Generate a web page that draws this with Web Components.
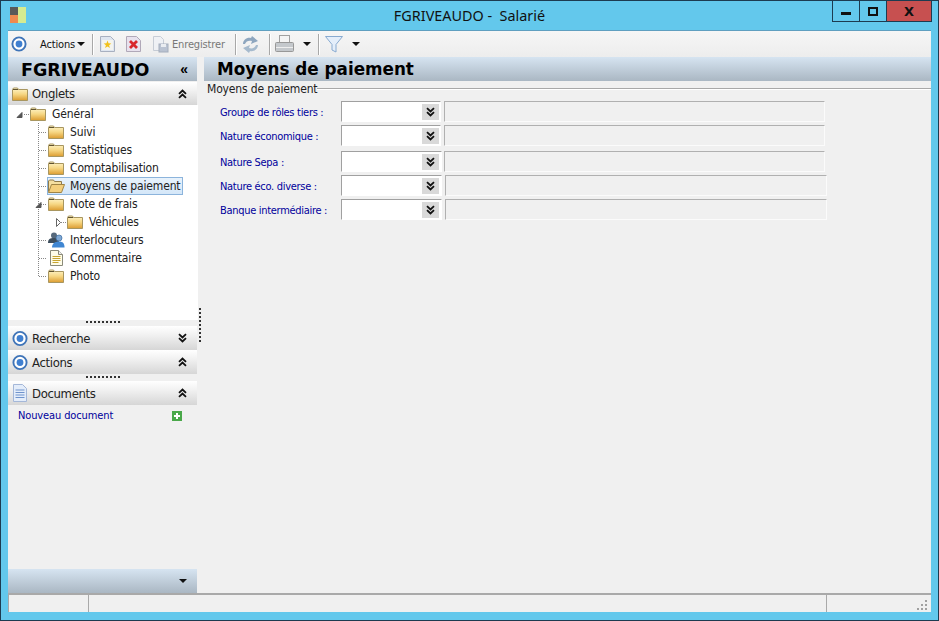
<!DOCTYPE html>
<html lang="fr">
<head>
<meta charset="utf-8">
<title>FGRIVEAUDO - Salarié</title>
<style>
  html, body { margin: 0; padding: 0; background: #63c8ec; }
  body { font: 12px "DejaVu Sans Condensed", "DejaVu Sans", sans-serif; font-stretch: condensed; color: #222; }
</style>
</head>
<body>
<app-window>
  <title-bar slot="title">FGRIVEAUDO -  Salarié</title-bar>
  <tool-bar slot="tools"></tool-bar>
  <side-panel slot="side">
    <span slot="name">FGRIVEAUDO</span>
    <section-head slot="onglets" icon="folder" dir="up" style="height:23px">Onglets</section-head>
    <tree-node slot="tree" level="0" icon="folder" toggle="open" line="none">Général</tree-node>
    <tree-node slot="tree" level="1" icon="folder">Suivi</tree-node>
    <tree-node slot="tree" level="1" icon="folder">Statistiques</tree-node>
    <tree-node slot="tree" level="1" icon="folder">Comptabilisation</tree-node>
    <tree-node slot="tree" level="1" icon="folderopen" selected>Moyens de paiement</tree-node>
    <tree-node slot="tree" level="1" icon="folder" toggle="open">Note de frais</tree-node>
    <tree-node slot="tree" level="2" icon="folder" toggle="closed">Véhicules</tree-node>
    <tree-node slot="tree" level="1" icon="users">Interlocuteurs</tree-node>
    <tree-node slot="tree" level="1" icon="note">Commentaire</tree-node>
    <tree-node slot="tree" level="1" icon="folder" line="last">Photo</tree-node>
    <section-head slot="recherche" icon="target" dir="down">Recherche</section-head>
    <section-head slot="actions" icon="target" dir="up">Actions</section-head>
    <section-head slot="documents" icon="doc" dir="up">Documents</section-head>
  </side-panel>
  <detail-pane slot="main" heading="Moyens de paiement" legend="Moyens de paiement">
    <form-row style="--combo:100px;--gap:3px;--field:381px">Groupe de rôles tiers :</form-row>
    <form-row style="--combo:100px;--gap:3px;--field:381px;--top:3px">Nature économique :</form-row>
    <form-row style="--combo:101px;--gap:2px;--field:381px;--top:5px;--btn:2px">Nature Sepa :</form-row>
    <form-row style="--combo:101px;--gap:3px;--field:382px;--top:3px;--btn:2px">Nature éco. diverse :</form-row>
    <form-row style="--combo:101px;--gap:3px;--field:382px;--top:3px;--btn:2px">Banque intermédiaire :</form-row>
  </detail-pane>
  <status-bar slot="status"></status-bar>
</app-window>

<script>
const UI_FONT = '"DejaVu Sans Condensed", "DejaVu Sans", sans-serif';

const icons = {
  target: s => `<svg width="${s}" height="${s}" viewBox="0 0 16 16"><circle cx="8" cy="8" r="6.600" fill="#fff" stroke="#3f74b8" stroke-width="1.900"/><circle cx="8" cy="8" r="3.400" fill="#3f7fd0"/></svg>`,
  folder: () => `<svg width="16" height="14" viewBox="0 0 16 14"><defs><linearGradient id="fg" x1="0" y1="0" x2="0" y2="1"><stop offset="0" stop-color="#fff6cc"/><stop offset=".5" stop-color="#f6d682"/><stop offset="1" stop-color="#dc9c30"/></linearGradient></defs><path d="M.5 2.500 1.500 1h4l1 1.500h9v11H.5z" fill="url(#fg)" stroke="#a89660"/><path d="M1 2.500h5" stroke="#5f5230"/></svg>`,
  folderopen: () => `<svg width="17" height="14" viewBox="0 0 17 14"><path d="M.5 12.500V2l1-1h4l1 1.500h7v2.500" fill="#f5dfa0" stroke="#8f7a4a"/><path d="M.5 13.500 3.500 5.500h13l-3 8z" fill="#f4cf7c" stroke="#a08445"/></svg>`,
  doc: () => `<svg width="16" height="18" viewBox="0 0 16 18"><path d="M1.500.5h9l4 4v13h-13z" fill="#e4edfa" stroke="#a4b7d8"/><path d="M3.500 6h9M3.500 8.500h9M3.500 11h9M3.500 13.500h9" stroke="#6f93cc"/></svg>`,
  users: () => `<svg width="18" height="16" viewBox="0 0 18 16"><circle cx="7" cy="3.500" r="3" fill="#56697c"/><path d="M1 11c0-4 2-5 6-5s5 1 5 5z" fill="#3d4d5c"/><circle cx="12" cy="6" r="3" fill="#7fa8d4" stroke="#3a6aa0" stroke-width=".7"/><path d="M5 15.500c0-4 3-6 7-6s5.500 2 5.500 6z" fill="#3f86d2"/></svg>`,
  note: () => `<svg width="13" height="16" viewBox="0 0 13 16"><path d="M.5.500h8l4 4v11H.5z" fill="#fffde8" stroke="#8a8a7a"/><path d="M8.500.500v4h4" fill="#eee" stroke="#8a8a7a"/><path d="M2.500 6.500h8M2.500 8.500h8M2.500 10.500h8M2.500 12.500h6" stroke="#c8a530"/></svg>`,
  chevrons: dir => `<svg width="9" height="10" viewBox="0 0 9 10"><path d="${dir === 'up' ? 'M1 4.800 4.500 1.500 8 4.800M1 8.800 4.500 5.500 8 8.800' : 'M1 1.200 4.500 4.500 8 1.200M1 5.200 4.500 8.500 8 5.200'}" fill="none" stroke="#111" stroke-width="1.800"/></svg>`,
  caret: () => `<svg width="8" height="4" viewBox="0 0 8 4"><path d="M0 0h8L4 4z" fill="#111"/></svg>`
};

class AppWindow extends HTMLElement {
  constructor() {
    super();
    this.attachShadow({ mode: 'open' }).innerHTML = `
      <style>
        :host { display: block; width: 939px; height: 621px; box-sizing: border-box; border: 1px solid #1d3b50; background: #63c8ec; }
        .client { box-sizing: border-box; width: 923px; height: 582px; margin-left: 7px; background: #f0f0f0; display: flex; flex-direction: column; border-top: 1px solid #5f9fc0; }
        .body { flex: 1; display: flex; min-height: 0; }
      </style>
      <slot name="title"></slot>
      <div class="client">
        <slot name="tools"></slot>
        <div class="body">
          <slot name="side"></slot>
          <slot name="main"></slot>
        </div>
        <slot name="status"></slot>
      </div>`;
  }
}

class TitleBar extends HTMLElement {
  constructor() {
    super();
    this.attachShadow({ mode: 'open' }).innerHTML = `
      <style>
        :host { display: grid; grid-template-columns: 1fr auto 1fr; height: 29px; font: 14.400px "Noto Sans", sans-serif; color: #111; }
        .logo { display: grid; grid-template: 8px 8px / 8px 8px; margin: 6px 0 0 9px; width: 16px; height: 16px; }
        .title { line-height: 30px; white-space: pre; }
        .btns { justify-self: end; display: flex; height: 21px; margin-right: 6px; box-sizing: border-box; border: 1px solid #1d3b50; border-top: 0; }
        .btns div { display: flex; align-items: center; justify-content: center; box-sizing: border-box; }
        .min { width: 27px; border-right: 1px solid #1d3b50; }
        .min i { width: 10px; height: 3px; background: #111; margin-top: 4px; }
        .max { width: 26px; }
        .max i { width: 6px; height: 5px; border: 2px solid #111; }
        .close { width: 45px; background: #c75050; color: #111; font: bold 13px "DejaVu Sans", sans-serif; border-left: 1px solid #1d3b50; }
      </style>
      <div><div class="logo">
        <span style="background:#595959"></span><span style="background:#d6eb90"></span>
        <span style="background:#ee8a50"></span><span style="background:#d6eb90"></span>
      </div></div>
      <div class="title"><slot></slot></div>
      <div class="btns">
        <div class="min"><i></i></div>
        <div class="max"><i></i></div>
        <div class="close">X</div>
      </div>`;
  }
}

class ToolBar extends HTMLElement {
  constructor() {
    super();
    const sep = ml => `<span class="sep" style="margin-left:${ml}px"></span>`;
    this.attachShadow({ mode: 'open' }).innerHTML = `
      <style>
        :host { display: flex; align-items: center; height: 26px; font: 11px ${UI_FONT}; font-stretch: condensed; letter-spacing: -.15px; color: #111; background: linear-gradient(#f6f6f6, #ededed); }
        span, svg { flex: none; }
        .sep { width: 1px; height: 21px; background: #a8a8a8; border-right: 1px solid #fff; }
        .off { color: #777; }
      </style>
      <span style="margin-left:3px;display:flex">${icons.target(16)}</span>
      <span style="margin-left:13px;width:35px">Actions</span>
      <span style="margin-left:2px;display:flex">${icons.caret()}</span>
      ${sep(7)}
      <svg style="margin-left:6px" width="15" height="16" viewBox="0 0 15 16"><path d="M.5.5h10l4 4v11H.5z" fill="#dfe6f0" stroke="#a8b0c0"/><rect x="2" y="4" width="11" height="10" fill="#f4f4ee"/><path d="M7.500 4.500l1 2.800 2.800.2-2.200 1.800.8 2.700-2.400-1.500-2.400 1.500.8-2.700-2.200-1.800 2.800-.2z" fill="#f2c21a"/></svg>
      <svg style="margin-left:11px" width="15" height="16" viewBox="0 0 15 16"><path d="M.5.5h10l4 4v11H.5z" fill="#e8e2ee" stroke="#b0a8b8"/><path d="M4 5l7 7M11 5l-7 7" stroke="#d8262c" stroke-width="2.800"/></svg>
      <svg style="margin-left:11px" width="17" height="17" viewBox="0 0 17 17" opacity=".75"><path d="M1.500.5h7l3 3v11h-10z" fill="#eef1f6" stroke="#b8c0cc"/><rect x="7" y="8" width="9" height="8" fill="#a8b4c8" stroke="#8c98ac"/><rect x="9" y="8" width="5" height="3" fill="#e8ecf2"/></svg>
      <span class="off" style="margin-left:3px;width:53px">Enregistrer</span>
      ${sep(10)}
      <svg style="margin-left:5px" width="17" height="17" viewBox="0 0 17 17"><path d="M1 8C1 4 5 1 9 2L10 0l6 5-7 3 1-3C7 4 4 5 3 8z" fill="#8ea6bf"/><path d="M1 8C1 4 5 1 9 2L10 0l6 5-7 3 1-3C7 4 4 5 3 8z" fill="#a6bacd" transform="rotate(180 8.500 8.500)"/></svg>
      ${sep(10)}
      <svg style="margin-left:4px" width="19" height="18" viewBox="0 0 19 18"><rect x="4.500" y=".5" width="10" height="8" fill="#f4f4f4" stroke="#a0a0a0"/><rect x=".5" y="7.500" width="18" height="9" rx="1" fill="#c4c8cc" stroke="#989898"/><path d="M1 12.500h17" stroke="#eee"/></svg>
      <span style="margin-left:9px;display:flex">${icons.caret()}</span>
      ${sep(7)}
      <svg style="margin-left:5px" width="18" height="17" viewBox="0 0 18 17"><path d="M.5.5h17L11 8.500v7.500l-4-2V8.500z" fill="#e4eefa" stroke="#88aad0"/></svg>
      <span style="margin-left:9px;display:flex">${icons.caret()}</span>`;
  }
}

class SidePanel extends HTMLElement {
  constructor() {
    super();
    this.attachShadow({ mode: 'open' }).innerHTML = `
      <style>
        :host { display: flex; flex-direction: column; flex: none; width: 196px; height: 100%; box-sizing: border-box; }
        .head { width: 189px; height: 24px; margin-bottom: 1px; flex: none; display: flex; align-items: center; background: linear-gradient(#d6e4f1, #aab7c3); font: bold 17.500px "DejaVu Sans", sans-serif; color: #000; }
        .head .name { margin-left: 13px; padding-top: 1px; flex: 1; }
        .head .fold { margin-right: 9px; font: bold 14px "Liberation Sans", sans-serif; }
        .cols { flex: 1; display: flex; min-height: 0; }
        .stack { flex: 1; display: flex; flex-direction: column; width: 189px; min-width: 0; }
        .tree { width: 190px; height: 215px; flex: none; box-sizing: border-box; background: #fff; }
        .grip { flex: none; width: 189px; display: flex; justify-content: center; box-sizing: border-box; }
        .grip i { width: 34px; height: 2px; background: repeating-linear-gradient(90deg, #333 0 2px, transparent 2px 4px); }
        .new { flex: none; display: flex; align-items: center; justify-content: space-between; height: 21px; padding: 0 15px 0 10px; font: 11px ${UI_FONT}; font-stretch: condensed; letter-spacing: -.12px; color: #00009c; }
        .new svg { display: block; }
        .fill { flex: 1; }
        .foot { flex: none; width: 189px; height: 24px; display: flex; align-items: center; justify-content: flex-end; background: linear-gradient(#d6e4f1, #aab7c3); }
        .foot span { display: flex; margin: 0 10px 0 0; }
        .split { flex: none; width: 7px; display: flex; align-items: center; justify-content: center; }
        .split i { width: 2px; height: 34px; margin-left: -1px; background: repeating-linear-gradient(#333 0 2px, transparent 2px 4px); }
      </style>
      <div class="cols">
        <div class="stack">
          <div class="head"><span class="name"><slot name="name"></slot></span><span class="fold">«</span></div>
          <slot name="onglets"></slot>
          <div class="tree"><slot name="tree"></slot></div>
          <div class="grip" style="height:6px;padding-top:1px"><i></i></div>
          <slot name="recherche"></slot>
          <slot name="actions"></slot>
          <div class="grip" style="height:7px;padding-top:2px"><i></i></div>
          <slot name="documents"></slot>
          <div class="new"><span>Nouveau document</span>
            <svg width="10" height="10" viewBox="0 0 10 10"><rect width="10" height="10" fill="#4aa84a"/><path d="M5 2v6M2 5h6" stroke="#fff" stroke-width="2"/></svg>
          </div>
          <div class="fill"></div>
          <div class="foot"><span>${icons.caret()}</span></div>
        </div>
        <div class="split"><i></i></div>
      </div>`;
  }
}

class SectionHead extends HTMLElement {
  constructor() {
    super();
    this.attachShadow({ mode: 'open' });
  }
  connectedCallback() {
    const name = this.getAttribute('icon');
    const glyph = name === 'target' ? icons.target(17) : icons[name]();
    this.shadowRoot.innerHTML = `
      <style>
        :host { display: flex; align-items: center; height: 24px; width: 189px; box-sizing: border-box; padding-left: 4px; font: 13px ${UI_FONT}; font-stretch: condensed; letter-spacing: -.35px; color: #222; background: linear-gradient(#fff, #f2f2f2 35%, #d6d6d6); }
        .ic { width: 16px; display: flex; justify-content: center; }
        .tx { flex: 1; margin-left: 4px; }
        .ch { display: flex; margin-right: 10px; }
      </style>
      <span class="ic">${glyph}</span><span class="tx"><slot></slot></span><span class="ch">${icons.chevrons(this.getAttribute('dir'))}</span>`;
  }
}

class TreeNode extends HTMLElement {
  constructor() {
    super();
    this.attachShadow({ mode: 'open' });
  }
  connectedCallback() {
    const level = +this.getAttribute('level');
    const toggle = this.getAttribute('toggle');
    const line = this.getAttribute('line');
    const gutter = [21, 39, 58][level];
    const dots = 'stroke="#888" stroke-dasharray="1 1" fill="none"';
    let marks = '';
    // guide line shared by the level 1 rows, it stops at the last one
    if (level > 0) marks += `<path d="M30.500 0V${line === 'last' ? 9 : 18}" ${dots}/>`;
    if (level === 1) marks += `<path d="M31 9.500H39" ${dots}/>`;
    if (level === 0) marks += `<path d="M16 9.500H21" ${dots}/>`;
    if (level === 2) marks += `<path d="M53 9.500H58" ${dots}/>`;
    const tx = { 0: 12, 1: 31, 2: 50 }[level];
    if (toggle === 'open') marks += `<path d="M${tx - 3} 12.500h5v-5z" fill="#555" stroke="#555"/>`;
    if (toggle === 'closed') marks += `<path d="M${tx - 2}.500 5.500v8l4-4z" fill="#fff" stroke="#666"/>`;
    this.shadowRoot.innerHTML = `
      <style>
        :host { display: flex; align-items: center; height: 18px; font: 12px ${UI_FONT}; font-stretch: condensed; letter-spacing: -.15px; color: #222; }
        svg { flex: none; display: block; }
        .ic { width: 18px; display: flex; justify-content: center; flex: none; }
        .tx { margin-left: 5px; white-space: nowrap; line-height: 16px; }
        .pick { display: flex; align-items: center; height: 18px; box-sizing: border-box; padding-right: 3px; }
        :host([selected]) .pick { background: linear-gradient(#e9f3fc, #d3e6f8); outline: 1px solid #8cb4dc; outline-offset: -1px; }
      </style>
      <svg width="${gutter}" height="18" viewBox="0 0 ${gutter} 18">${marks}</svg>
      <span class="pick"><span class="ic">${icons[this.getAttribute('icon')]()}</span><span class="tx"><slot></slot></span></span>`;
  }
}

class DetailPane extends HTMLElement {
  constructor() {
    super();
    this.attachShadow({ mode: 'open' });
  }
  connectedCallback() {
    this.shadowRoot.innerHTML = `
      <style>
        :host { display: block; flex: 1; min-width: 0; }
        h1 { margin: 0; height: 24px; padding-left: 13px; font: bold 16.800px/25px "DejaVu Sans", sans-serif; color: #000; background: linear-gradient(#d6e4f1, #aab7c3); }
        .legend { display: flex; align-items: center; height: 16px; padding-left: 3px; font: 12px ${UI_FONT}; font-stretch: condensed; letter-spacing: -.15px; color: #222; }
        .legend i { flex: 1; height: 1px; background: #a8a8a8; border-bottom: 1px solid #fff; }
        .rows { padding: 4px 0 0 16px; }
      </style>
      <h1>${this.getAttribute('heading')}</h1>
      <div class="legend"><span>${this.getAttribute('legend')}</span><i></i></div>
      <div class="rows"><slot></slot></div>`;
  }
}

class FormRow extends HTMLElement {
  constructor() {
    super();
    this.attachShadow({ mode: 'open' }).innerHTML = `
      <style>
        :host { display: flex; align-items: center; height: 21px; margin-top: var(--top, 0); font: 11px ${UI_FONT}; font-stretch: condensed; letter-spacing: -.3px; color: #00009c; }
        .lb { width: 121px; flex: none; white-space: nowrap; padding-top: 2px; }
        .combo { width: var(--combo); height: 21px; box-sizing: border-box; flex: none; display: flex; align-items: center; justify-content: flex-end; padding-right: var(--btn, 1px); background: #fff; border: 1px solid #fff; border-top-color: #a0a0a0; border-left-color: #a0a0a0; }
        .btn { width: 17px; height: 16px; display: flex; align-items: center; justify-content: center; background: #d9d9d9; }
        .field { width: var(--field); height: 21px; box-sizing: border-box; margin-left: var(--gap); flex: none; border: 1px solid #fbfbfb; border-top-color: #b0b0b0; border-left-color: #b0b0b0; background: #f0f0f0; }
      </style>
      <span class="lb"><slot></slot></span>
      <span class="combo"><span class="btn">${icons.chevrons('down')}</span></span>
      <span class="field"></span>`;
  }
}

class StatusBar extends HTMLElement {
  constructor() {
    super();
    this.attachShadow({ mode: 'open' }).innerHTML = `
      <style>
        :host { display: flex; flex: none; height: 19px; box-sizing: border-box; border-top: 2px solid #a9a9a9; background: #f0f0f0; }
        div { box-sizing: border-box; height: 100%; border-left: 1px solid #a9a9a9; }
        .a { width: 80px; }
        .b { width: 738px; }
        .c { flex: 1; position: relative; }
        svg { position: absolute; right: 3px; bottom: 1px; }
      </style>
      <div class="a"></div><div class="b"></div>
      <div class="c"><svg width="12" height="12" viewBox="0 0 12 12" fill="#a0a0a0"><rect x="9" y="1" width="2" height="2"/><rect x="5" y="5" width="2" height="2"/><rect x="9" y="5" width="2" height="2"/><rect x="1" y="9" width="2" height="2"/><rect x="5" y="9" width="2" height="2"/><rect x="9" y="9" width="2" height="2"/></svg></div>`;
  }
}

customElements.define('app-window', AppWindow);
customElements.define('title-bar', TitleBar);
customElements.define('tool-bar', ToolBar);
customElements.define('side-panel', SidePanel);
customElements.define('section-head', SectionHead);
customElements.define('tree-node', TreeNode);
customElements.define('detail-pane', DetailPane);
customElements.define('form-row', FormRow);
customElements.define('status-bar', StatusBar);
</script>
</body>
</html>
